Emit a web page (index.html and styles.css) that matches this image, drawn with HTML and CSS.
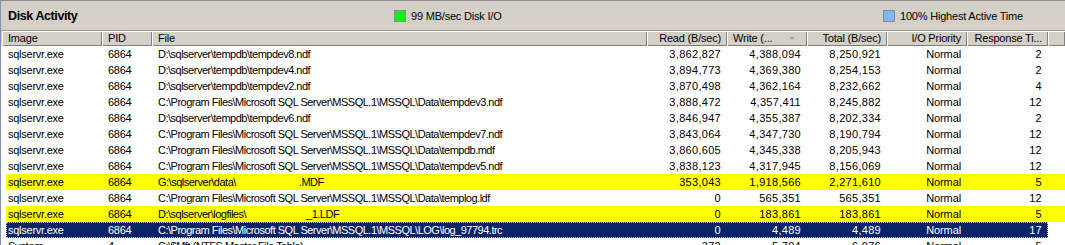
FILE: index.html
```html
<!DOCTYPE html>
<html>
<head>
<meta charset="utf-8">
<link rel="stylesheet" href="styles.css">
</head>
<body>
<div class="panel">
  <div class="titlebar">
    <div class="title">Disk Activity</div>
    <div class="legend legend-io"><span class="swatch swatch-green"></span><span>99 MB/sec Disk I/O</span></div>
    <div class="legend legend-active"><span class="swatch swatch-blue"></span><span>100% Highest Active Time</span></div>
  </div>
  <div class="header">
    <div class="hcell">Image</div>
    <div class="hcell">PID</div>
    <div class="hcell">File</div>
    <div class="hcell right">Read (B/sec)</div>
    <div class="hcell sorted">Write (...<span class="sort-arrow"></span></div>
    <div class="hcell right">Total (B/sec)</div>
    <div class="hcell right">I/O Priority</div>
    <div class="hcell right">Response Ti...</div>
    <div class="hcell filler"></div>
  </div>
  <div class="rows">
    <div class="row"><span>sqlservr.exe</span><span>6864</span><span>D:\sqlserver\tempdb\tempdev8.ndf</span><span class="num">3,862,827</span><span class="num">4,388,094</span><span class="num">8,250,921</span><span class="num">Normal</span><span class="num">2</span></div>
    <div class="row"><span>sqlservr.exe</span><span>6864</span><span>D:\sqlserver\tempdb\tempdev4.ndf</span><span class="num">3,894,773</span><span class="num">4,369,380</span><span class="num">8,254,153</span><span class="num">Normal</span><span class="num">2</span></div>
    <div class="row"><span>sqlservr.exe</span><span>6864</span><span>D:\sqlserver\tempdb\tempdev2.ndf</span><span class="num">3,870,498</span><span class="num">4,362,164</span><span class="num">8,232,662</span><span class="num">Normal</span><span class="num">4</span></div>
    <div class="row"><span>sqlservr.exe</span><span>6864</span><span>C:\Program Files\Microsoft SQL Server\MSSQL.1\MSSQL\Data\tempdev3.ndf</span><span class="num">3,888,472</span><span class="num">4,357,411</span><span class="num">8,245,882</span><span class="num">Normal</span><span class="num">12</span></div>
    <div class="row"><span>sqlservr.exe</span><span>6864</span><span>D:\sqlserver\tempdb\tempdev6.ndf</span><span class="num">3,846,947</span><span class="num">4,355,387</span><span class="num">8,202,334</span><span class="num">Normal</span><span class="num">2</span></div>
    <div class="row"><span>sqlservr.exe</span><span>6864</span><span>C:\Program Files\Microsoft SQL Server\MSSQL.1\MSSQL\Data\tempdev7.ndf</span><span class="num">3,843,064</span><span class="num">4,347,730</span><span class="num">8,190,794</span><span class="num">Normal</span><span class="num">12</span></div>
    <div class="row"><span>sqlservr.exe</span><span>6864</span><span>C:\Program Files\Microsoft SQL Server\MSSQL.1\MSSQL\Data\tempdb.mdf</span><span class="num">3,860,605</span><span class="num">4,345,338</span><span class="num">8,205,943</span><span class="num">Normal</span><span class="num">12</span></div>
    <div class="row"><span>sqlservr.exe</span><span>6864</span><span>C:\Program Files\Microsoft SQL Server\MSSQL.1\MSSQL\Data\tempdev5.ndf</span><span class="num">3,838,123</span><span class="num">4,317,945</span><span class="num">8,156,069</span><span class="num">Normal</span><span class="num">12</span></div>
    <div class="row hl"><span>sqlservr.exe</span><span>6864</span><span>G:\sqlserver\data\<span class="gap gap-a"></span>.MDF</span><span class="num">353,043</span><span class="num">1,918,566</span><span class="num">2,271,610</span><span class="num">Normal</span><span class="num">5</span></div>
    <div class="row"><span>sqlservr.exe</span><span>6864</span><span>C:\Program Files\Microsoft SQL Server\MSSQL.1\MSSQL\Data\templog.ldf</span><span class="num">0</span><span class="num">565,351</span><span class="num">565,351</span><span class="num">Normal</span><span class="num">12</span></div>
    <div class="row hl"><span>sqlservr.exe</span><span>6864</span><span>D:\sqlserver\logfiles\<span class="gap gap-b"></span>_1.LDF</span><span class="num">0</span><span class="num">183,861</span><span class="num">183,861</span><span class="num">Normal</span><span class="num">5</span></div>
    <div class="row selected"><span>sqlservr.exe</span><span>6864</span><span>C:\Program Files\Microsoft SQL Server\MSSQL.1\MSSQL\LOG\log_97794.trc</span><span class="num">0</span><span class="num">4,489</span><span class="num">4,489</span><span class="num">Normal</span><span class="num">17</span></div>
    <div class="row"><span>System</span><span>4</span><span>C:\$Mft (NTFS Master File Table)</span><span class="num">372</span><span class="num">5,704</span><span class="num">6,076</span><span class="num">Normal</span><span class="num">5</span></div>
  </div>
</div>
</body>
</html>
```

FILE: styles.css
```css
html, body {
  margin: 0;
  padding: 0;
  background: #ffffff;
}

body {
  font-family: "Liberation Sans", Arial, sans-serif;
  font-size: 11px;
  color: #000;
}

.panel {
  width: 1065px;
  height: 245px;
  overflow: hidden;
  box-sizing: border-box;
  border-top: 1px solid #8c8c8c;
  border-left: 1px solid #7f93b0;
  padding-left: 1px;
  background: #fff;
}

.titlebar {
  height: 29px;
  background: #d4d0c8;
  display: flex;
  align-items: center;
  margin-left: -1px;
  padding-left: 1px;
}

.title {
  width: 392px;
  padding-left: 6px;
  box-sizing: border-box;
  font-weight: bold;
  font-size: 12.5px;
  letter-spacing: -0.4px;
  padding-top: 1px;
}

.legend {
  display: flex;
  align-items: center;
  gap: 5px;
  letter-spacing: -0.2px;
}

.legend-io {
  width: 489px;
}

.swatch {
  width: 10px;
  height: 10px;
  border: 1px solid #8a8a8a;
  display: inline-block;
}

.swatch-green {
  background: #00ff00;
}

.swatch-blue {
  background: #80b8ff;
}

.header {
  display: grid;
  grid-template-columns: 100px 50px 495px 80px 80px 80px 80px 81px 1fr;
  height: 15px;
  background: #d4d0c8;
  border-top: 1px solid #9a9a9a;
  margin-left: -1px;
  padding-left: 1px;
}

.hcell {
  box-sizing: border-box;
  padding: 0 6px;
  line-height: 15px;
  white-space: nowrap;
  overflow: hidden;
  box-shadow: inset 1px 1px 0 #ffffff, inset -1px -1px 0 #808080;
  letter-spacing: -0.2px;
}

.hcell.right {
  text-align: right;
}

.hcell.sorted {
  display: flex;
  align-items: center;
}

.sort-arrow {
  width: 0;
  height: 0;
  margin-left: 17px;
  border-left: 3px solid transparent;
  border-right: 3px solid transparent;
  border-top: 3px solid #a0a0a0;
}

.rows {
  display: flex;
  flex-direction: column;
}

.row {
  display: grid;
  grid-template-columns: 96px 50px 495px 80px 80px 80px 80px 81px;
  height: 16px;
  line-height: 16px;
  margin-left: 4px;
  white-space: nowrap;
}

.row > span {
  padding-left: 2px;
  overflow: hidden;
  letter-spacing: -0.25px;
}

.row > span:nth-child(2),
.row > span:nth-child(3) {
  padding-left: 6px;
}

.row > span:nth-child(3) {
  letter-spacing: -0.5px;
}

.row > span.num {
  text-align: right;
  padding-left: 0;
  padding-right: 6px;
  letter-spacing: 0.3px;
}

.row > span:nth-child(7) {
  letter-spacing: -0.1px;
}

.row.hl {
  background: #ffff00;
}

.row.selected {
  width: 1042px;
  background: #0a246a;
  color: #ffffff;
  outline: 1px dotted #d0d0d0;
  outline-offset: -1px;
}

.gap {
  display: inline-block;
}

.gap-a {
  width: 63px;
}

.gap-b {
  width: 60px;
}
```
